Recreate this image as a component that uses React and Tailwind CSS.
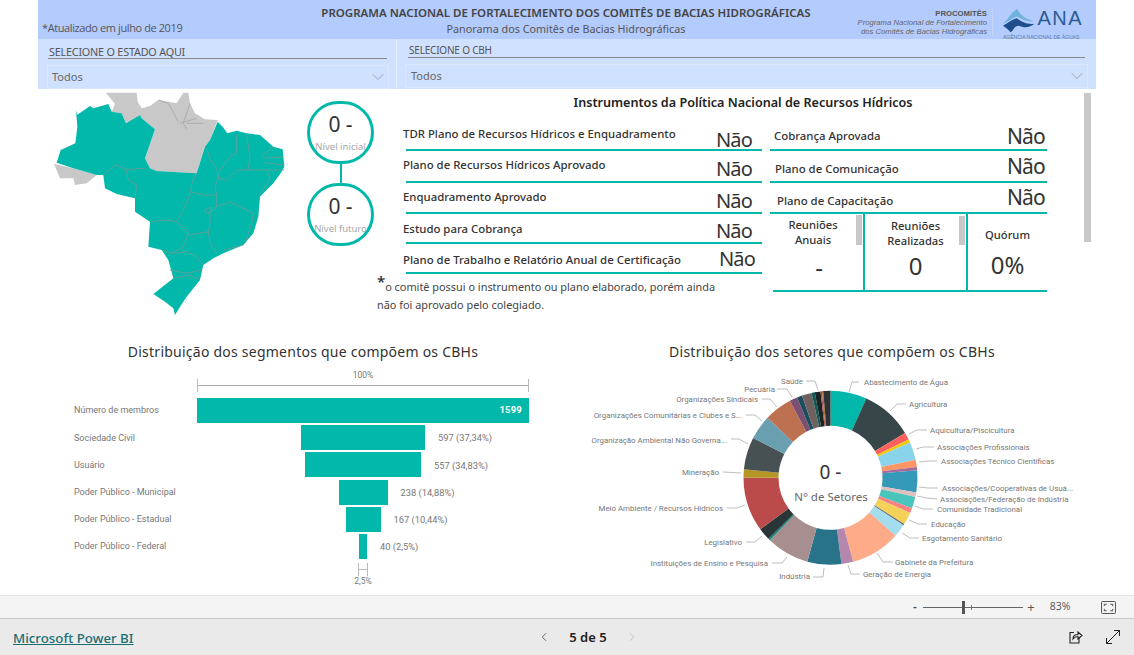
import React from 'react';
import { ChevronDown, ChevronLeft, ChevronRight } from 'lucide-react';

const leftRows = [
  { label: 'TDR Plano de Recursos Hídricos e Enquadramento', h: 'h-[31px]', lab: 'pt-[6px]', val: 'pt-[6px]', right: 'pr-[10px]' },
  { label: 'Plano de Recursos Hídricos Aprovado', h: 'h-[32px]', lab: 'pt-[6px]', val: 'pt-[4px]', right: 'pr-[10px]' },
  { label: 'Enquadramento Aprovado', h: 'h-[31px]', lab: 'pt-[6px]', val: 'pt-[4px]', right: 'pr-[10px]' },
  { label: 'Estudo para Cobrança', h: 'h-[30px]', lab: 'pt-[7px]', val: 'pt-[3px]', right: 'pr-[10px]' },
  { label: 'Plano de Trabalho e Relatório Anual de Certificação', h: 'h-[30px]', lab: 'pt-[8px]', val: 'pt-[1px]', right: 'pr-[7px]' },
];

const rightRows = [
  { label: 'Cobrança Aprovada', h: 'h-[31px]', pad: 'pl-[4px]', lab: 'pt-[8px]', val: 'pt-[2px]' },
  { label: 'Plano de Comunicação', h: 'h-[32px]', pad: 'pl-[5px]', lab: 'pt-[10px]', val: 'pt-[1px]' },
  { label: 'Plano de Capacitação', h: 'h-[31px]', pad: 'pl-[7px]', lab: 'pt-[10px]', val: 'pt-0' },
];

const segments = [
  { label: 'Número de membros', width: 332, value: '1599' },
  { label: 'Sociedade Civil', width: 124, value: '597 (37,34%)' },
  { label: 'Usuário', width: 116, value: '557 (34,83%)' },
  { label: 'Poder Público - Municipal', width: 49, value: '238 (14,88%)' },
  { label: 'Poder Público - Estadual', width: 35, value: '167 (10,44%)' },
  { label: 'Poder Público - Federal', width: 8, value: '40 (2,5%)' },
];

// fatias da rosca: [fim em graus, cor]
const slices = [
  [24.3, '#01B8AA'], [59, '#374649'], [63.8, '#FD625E'], [66, '#F2C80F'], [78, '#8AD4EB'],
  [82.8, '#FE9666'], [85, '#A66999'], [99.7, '#3599B8'], [102.8, '#DFBFBF'], [110.5, '#4AC5BB'],
  [113.8, '#FB8281'], [122, '#F4D25A'], [123, '#5F6B6D'], [131.7, '#A4DDEE'], [164.9, '#FDAB89'],
  [172.8, '#B687AC'], [195.5, '#28738A'], [224.2, '#A78F8F'], [225.5, '#168980'], [233.8, '#293537'],
  [270, '#BB4A4A'], [275.7, '#B59525'], [297.2, '#475052'], [313.6, '#6A9FB0'], [332.2, '#BD7150'],
  [337.4, '#7B4F71'], [340.9, '#1B4D5C'], [347.4, '#706160'], [349.6, '#0F5C55'], [353.4, '#1C2325'],
  [354.3, '#A84A4A'], [355.2, '#B06A3A'], [360, '#2B3335'],
];

const pieLabels = [
  ['Abastecimento de Água', 864, 382, 'start', '859,382 852,382 849,392'],
  ['Agricultura', 909, 404, 'start', '906,404 897,404 890,411'],
  ['Aquicultura/Piscicultura', 930, 430, 'start', '927,430 917,430 909,434'],
  ['Associações Profissionais', 937, 447, 'start', '934,447 923,447 916,449'],
  ['Associações Técnico Científicas', 941, 461, 'start', '937,461 928,461 919,462'],
  ['Associações/Cooperativas de Usuá...', 942, 488, 'start', '938,488 928,488 919,487'],
  ['Associações/Federação de Indústria', 940, 499, 'start', '937,499 927,498 917,496'],
  ['Comunidade Tradicional', 937, 509, 'start', '933,509 923,509 915,506'],
  ['Educação', 931, 524, 'start', '927,524 918,524 909,520'],
  ['Esgotamento Sanitário', 922, 538, 'start', '919,538 910,538 902,533'],
  ['Gabinete da Prefeitura', 895, 562, 'start', '893,562 883,562 877,553'],
  ['Geração de Energia', 863, 574, 'start', '860,574 851,574 848,565'],
  ['Indústria', 810, 576, 'end', '813,577 823,577 824,568'],
  ['Instituições de Ensino e Pesquisa', 768, 563, 'end', '772,563 782,563 787,557'],
  ['Legislativo', 742, 542, 'end', '746,542 755,542 762,536'],
  ['Meio Ambiente / Recursos Hídricos', 723, 508, 'end', '727,508 737,508 745,505'],
  ['Mineração', 719, 472, 'end', '723,472 741,473'],
  ['Organização Ambiental Não Governa...', 727, 440, 'end', '731,439 739,439 748,444'],
  ['Organizações Comunitárias e Clubes e S...', 742, 415, 'end', '746,415 755,415 762,421'],
  ['Organizações Síndicais', 758, 399, 'end', '762,399 770,399 777,407'],
  ['Pecuária', 775, 389, 'end', '777,389 787,389 792,397'],
  ['Saúde', 803, 381, 'end', '806,381 815,381 818,390'],
];

function slicePath(from, to) {
  const cx = 830.5, cy = 477.8, r = 87, ri = 52;
  const pt = (rad, deg) => {
    const a = (deg * Math.PI) / 180;
    return `${(cx + rad * Math.sin(a)).toFixed(2)} ${(cy - rad * Math.cos(a)).toFixed(2)}`;
  };
  const large = to - from > 180 ? 1 : 0;
  return `M${pt(r, from)} A${r} ${r} 0 ${large} 1 ${pt(r, to)} L${pt(ri, to)} A${ri} ${ri} 0 ${large} 0 ${pt(ri, from)} Z`;
}

function BrazilMap() {
  return (
    <svg viewBox="0 0 735 690" className="w-[245px] h-[230px] mt-[1px] ml-[2px] shrink-0">
      <path fill="#C8C8C8" d="M198 8 L290 8 L293 35 L305 55 L330 48 L355 30 L385 35 L410 40 L430 8 L445 8 L450 40 L465 70 L495 88 L533 90 L510 150 L495 170 L470 250 L350 243 L330 235 L315 205 L345 118 L305 85 L300 75 L258 100 L245 70 L215 65 L225 42 Z" />
      <path fill="#C8C8C8" d="M42 222 L100 235 L170 255 L140 280 L105 285 L100 265 L60 265 Z" />
      <path fill="#01B8AA" d="M108 60 L112 74 L150 48 L160 55 L205 42 L215 65 L245 70 L258 100 L300 75 L305 85 L345 118 L315 205 L330 235 L350 243 L470 250 L495 170 L510 150 L533 95 L548 110 L562 130 L590 122 L620 130 L660 135 L700 170 L728 178 L733 230 L722 250 L700 280 L660 320 L655 380 L640 430 L610 465 L550 490 L520 505 L490 525 L480 570 L440 620 L420 650 L405 675 L400 655 L375 635 L340 612 L400 565 L385 510 L365 480 L325 470 L330 395 L285 365 L285 325 L230 312 L195 295 L190 255 L170 255 L100 235 L50 218 L62 180 L106 160 L112 110 Z" />
      <g fill="none" stroke="#6F9C97" strokeWidth="2.5">
        <path d="M190 255 L225 225 L258 238 L315 235 M258 238 L265 270 L290 285 L285 325" />
        <path d="M470 250 L455 280 L452 305 L435 350 L410 395 L375 390 L335 395 M410 395 L445 430 L430 470 L395 490 L365 480" />
        <path d="M452 305 L490 315 L530 315 M500 175 L510 210 L530 235 L535 265 L525 290 L530 315 L530 350" />
        <path d="M530 350 L510 368 L510 400 L505 425 L445 435 M505 425 L510 460 L530 490 M495 358 L515 352 L512 368 L495 368 Z" />
        <path d="M530 350 L570 335 L600 350 L640 370 L635 400 L615 460 M610 465 L550 480" />
        <path d="M395 490 L440 485 L470 500 L490 525 M390 540 L440 550 L485 540 M400 565 L450 555 L480 570" />
        <path d="M590 135 L590 190 L570 200 L540 240 L535 265 L560 270 L590 240 L620 240 M620 135 L630 200 L625 240 L680 240 L690 265 L660 315" />
        <path d="M665 200 L700 170 M668 205 L730 200 M670 218 L733 225 M680 240 L733 240" />
      </g>
      <path d="M428 640 L445 618 L438 640 Z" fill="#E8F5F4" />
      <g fill="none" stroke="#9E9E9E" strokeWidth="2">
        <path d="M355 30 L385 40 L415 95 M450 40 L430 100 L440 118 M440 100 L490 100 M420 100 L470 85" />
      </g>
    </svg>
  );
}

function Circle({ label }) {
  return (
    <div className="w-[67px] h-[63px] rounded-full border-[3px] border-[#01B8AA] flex flex-col items-center justify-center">
      <div className="text-[21px] leading-[26px] text-[#333] -mt-[2px]">0 -</div>
      <div className="text-[9.5px] leading-[13px] text-[#A6A6A6] mt-[3px] whitespace-nowrap">{label}</div>
    </div>
  );
}

function AnaLogo() {
  return (
    <svg viewBox="0 0 36 26" className="w-[36px] h-[26px]">
      <path fill="#6FB3DC" d="M0 16 C6 10 9 4 15 0 C18 5 22 10 33 13 C25 14 20 11 15 8 C10 10 6 14 0 16 Z" />
      <path fill="#1F4E8C" d="M0 18 C6 15 10 11 15 10 C20 14 26 17 34 16 C28 21 22 20 17 18 C12 18 11 24 8 25 C6 22 3 20 0 18 Z" />
    </svg>
  );
}

function ShareIcon() {
  return (
    <svg viewBox="0 0 16 16" className="w-[16px] h-[16px]" fill="none" stroke="#222" strokeWidth="1.1">
      <path d="M7 3.5 H3 V14 H12 V9" />
      <path d="M6 10 C6 7 8 5.5 11 5.5 V3 L15 6.5 L11 10 V7.5 C9 7.5 7.5 8 6 10 Z" />
    </svg>
  );
}

function ExpandIcon() {
  return (
    <svg viewBox="0 0 16 16" className="w-[16px] h-[16px]" fill="none" stroke="#222" strokeWidth="1">
      <path d="M9 1.5 H14.5 V7 M14.5 1.5 L1.5 14.5 M1.5 9 V14.5 H7" />
    </svg>
  );
}

function FitIcon() {
  return (
    <svg viewBox="0 0 16 14" className="w-[15px] h-[13px]" fill="none" stroke="#444" strokeWidth="1">
      <rect x="0.5" y="0.5" width="15" height="13" rx="1" />
      <path d="M3.5 5.5 V3.5 H6 M10 3.5 H12.5 V5.5 M12.5 8.5 V10.5 H10 M6 10.5 H3.5 V8.5" />
    </svg>
  );
}

export default function App() {
  return (
    <div className="w-[1134px] h-[655px] overflow-hidden bg-white flex flex-col font-['Noto_Sans',sans-serif]">
      <div className="flex-1 min-h-0 px-[38px] flex flex-col">
        {/* cabeçalho */}
        <div className="h-[39px] shrink-0 bg-[#B3CBFD] flex">
          <div className="w-[283px] pl-[4px] pt-[20px] text-[11px] leading-[16px] text-[#555] tracking-[-0.4px] font-['Open_Sans',sans-serif]">*Atualizado em julho de 2019</div>
          <div className="w-[490px] text-center pt-[4px]">
            <div className="text-[11.5px] leading-[17px] font-semibold text-[#444] whitespace-nowrap">PROGRAMA NACIONAL DE FORTALECIMENTO DOS COMITÊS DE BACIAS HIDROGRÁFICAS</div>
            <div className="text-[10.8px] leading-[15px] text-[#555] whitespace-nowrap">Panorama dos Comitês de Bacias Hidrográficas</div>
          </div>
          <div className="w-[176px] pt-[9px] text-right font-['Liberation_Sans',sans-serif] text-[#666]">
            <div className="text-[7.7px] leading-[9px] font-bold text-[#555]">PROCOMITÊS</div>
            <div className="text-[7.7px] leading-[9px] italic">Programa Nacional de Fortalecimento</div>
            <div className="text-[7.7px] leading-[9px] italic">dos Comitês de Bacias Hidrográficas</div>
          </div>
          <div className="w-px h-[27px] mt-[9px] ml-[5px] bg-[#C4D5F5]" />
          <div className="ml-[10px] pt-[8px] w-[80px] relative">
            <div className="flex items-start">
              <AnaLogo />
              <span className="ml-[1px] text-[20px] leading-[20px] tracking-[1.5px] font-light text-[#2C5C92] font-['Liberation_Sans',sans-serif]">ANA</span>
            </div>
            <div className="text-[5px] leading-[6px] text-[#5A7AA8] whitespace-nowrap font-['Liberation_Sans',sans-serif]">AGÊNCIA NACIONAL DE ÁGUAS</div>
          </div>
        </div>

        {/* filtros */}
        <div className="h-[50px] shrink-0 bg-[#D0E0FF] flex">
          <div className="w-[359px] border-r border-[#E6EEFF] pl-[9px] pr-[7px] pt-[5px]">
            <div className="ml-[1px] mr-[2px] h-[15px] border-b border-[#888] pl-[1px] text-[10.8px] leading-[15px] text-[#555] tracking-[-0.2px] whitespace-nowrap">SELECIONE O ESTADO AQUI</div>
            <div className="mt-[6px] h-[24px] border border-[#DCE7FF] flex items-center justify-between pl-[4px] text-[11px] text-[#666]">
              <span>Todos</span>
              <ChevronDown className="w-[20px] h-[20px] text-[#888]" strokeWidth={0.8} />
            </div>
          </div>
          <div className="flex-1 pl-[8px] pr-[8px] pt-[4px]">
            <div className="mx-[3px] h-[15px] border-b border-[#888] pl-[1px] text-[10px] leading-[15px] text-[#555] tracking-[-0.2px]">SELECIONE O CBH</div>
            <div className="mt-[6px] h-[24px] border border-[#DCE7FF] flex items-center justify-between pl-[5px] text-[11px] text-[#666]">
              <span>Todos</span>
              <ChevronDown className="w-[20px] h-[20px] text-[#888]" strokeWidth={0.8} />
            </div>
          </div>
        </div>

        {/* bloco superior */}
        <div className="h-[241px] shrink-0 flex relative">
          <BrazilMap />
          <div className="ml-[22px] mt-[12px] w-[67px] shrink-0 flex flex-col items-center">
            <Circle label="Nível inicial" />
            <div className="w-[2px] h-[19px] bg-[#01B8AA]" />
            <Circle label="Nível futuro" />
          </div>
          <div className="ml-[29px] w-[680px] shrink-0">
            <div className="h-[31px] pt-[5px] text-center text-[12.6px] leading-[17px] font-semibold text-[#222] whitespace-nowrap">Instrumentos da Política Nacional de Recursos Hídricos</div>
            <div className="flex">
              <div className="w-[359px] shrink-0">
                {leftRows.map((row) => (
                  <div key={row.label} className={`${row.h} ml-[3px] border-b-[2px] border-[#01B8AA] flex justify-between ${row.right}`}>
                    <span className={`-ml-[3px] ${row.lab} text-[11.4px] leading-[16px] font-medium text-[#333] whitespace-nowrap`}>{row.label}</span>
                    <span className={`${row.val} text-[20px] leading-[27px] tracking-[-0.8px] text-[#333]`}>Não</span>
                  </div>
                ))}
                <div className="mt-[1px] -ml-[26px] w-[345px] text-[10.9px] leading-[18px] text-[#444]">
                  <div className="flex items-start">
                    <span className="shrink-0 -mt-[4px] text-[15px] leading-[20px] font-semibold text-[#333]">*</span>
                    <span className="pt-[3px] whitespace-nowrap">o comitê possui o instrumento ou plano elaborado, porém ainda</span>
                  </div>
                  <div className="whitespace-nowrap">não foi aprovado pelo colegiado.</div>
                </div>
              </div>
              <div className="ml-[8px] w-[277px] shrink-0">
                {rightRows.map((row) => (
                  <div key={row.label} className={`${row.h} border-b-[2px] border-[#01B8AA] flex justify-between ${row.pad}`}>
                    <span className={`${row.lab} text-[11.4px] leading-[16px] font-medium text-[#333] whitespace-nowrap`}>{row.label}</span>
                    <span className={`${row.val} text-[21px] leading-[29px] tracking-[-0.8px] text-[#333] pr-[2px]`}>Não</span>
                  </div>
                ))}
                <div className="ml-[3px] h-[78px] border-b-[2px] border-[#01B8AA] flex text-center text-[#333]">
                  <div className="w-[92px] border-r-[2px] border-[#01B8AA] relative pt-[3px]">
                    <div className="text-[11.2px] leading-[15px] font-medium pr-[10px]">Reuniões<br />Anuais</div>
                    <div className="text-[24px] leading-[32px] mt-[4px] pl-[2px]">-</div>
                    <div className="absolute right-[1px] top-[1px] w-[6px] h-[30px] bg-[#C8C8C8]" />
                  </div>
                  <div className="w-[103px] border-r-[2px] border-[#01B8AA] relative pt-[4px]">
                    <div className="text-[11.2px] leading-[15px] font-medium">Reuniões<br />Realizadas</div>
                    <div className="text-[24px] leading-[32px] mt-[2px]">0</div>
                    <div className="absolute right-[1px] top-[2px] w-[6px] h-[29px] bg-[#C8C8C8]" />
                  </div>
                  <div className="flex-1 pt-[13px]">
                    <div className="text-[11.2px] leading-[15px] font-medium">Quórum</div>
                    <div className="text-[24px] leading-[32px] mt-[7px]">0%</div>
                  </div>
                </div>
              </div>
            </div>
          </div>
          <div className="absolute left-[1046px] top-[4px] w-[7px] h-[149px] bg-[#C8C8C8]" />
        </div>

        {/* gráficos */}
        <div className="flex-1 min-h-0 flex">
          <div className="w-[530px] shrink-0">
            <div className="pt-[12px] h-[32px] text-center text-[14px] leading-[20px] text-[#333] tracking-[0.24px] whitespace-nowrap">Distribuição dos segmentos que compõem os CBHs</div>
            <div className="ml-[159px] w-[332px] font-['Roboto',sans-serif]">
              <div className="h-[16px] pt-[8px] text-center text-[8.5px] leading-[10px] text-[#777]">100%</div>
              <div className="h-[13px] mt-[1px] border-x border-[#BBB] flex items-center">
                <div className="w-full h-px bg-[#AAA]" />
              </div>
            </div>
            <div className="mt-[5px] pl-[36px] font-['Roboto',sans-serif]">
              {segments.map((seg, i) => (
                <div key={seg.label} className="h-[27.2px] flex items-center">
                  <div className="w-[123px] shrink-0 pt-[1px] text-[9px] text-[#777] whitespace-nowrap">{seg.label}</div>
                  <div className="w-[332px] shrink-0 flex justify-center">
                    <div className="relative h-[25px] bg-[#01B8AA] flex items-center justify-end" style={{ width: seg.width }}>
                      {i === 0 ? (
                        <span className="pr-[7px] text-[9.5px] tracking-[0.2px] font-bold text-white">{seg.value}</span>
                      ) : (
                        <span className="absolute left-full ml-[13px] pt-[1px] text-[9.3px] text-[#777] whitespace-nowrap">{seg.value}</span>
                      )}
                    </div>
                  </div>
                </div>
              ))}
              <div className="ml-[284px] w-[10px] h-[13px] mt-[3px] border-x border-[#BBB] flex items-center">
                <div className="w-full h-px bg-[#BBB]" />
              </div>
              <div className="ml-[123px] w-[332px] text-center text-[8.5px] leading-[11px] text-[#777]">2,5%</div>
            </div>
          </div>
          <div className="flex-1 min-w-0">
            <div className="pt-[12px] h-[32px] text-center text-[14px] leading-[20px] text-[#333] tracking-[0.26px] whitespace-nowrap">Distribuição dos setores que compõem os CBHs</div>
            <svg viewBox="580 370 510 222" className="ml-[12px] mt-[8px] w-[510px] h-[222px]">
              {slices.map(([end, color], i) => (
                <path key={color + i} d={slicePath(i === 0 ? 0 : slices[i - 1][0], end)} fill={color} />
              ))}
              {pieLabels.map(([text, x, y, anchor, line]) => (
                <g key={text}>
                  <polyline points={line} fill="none" stroke="#BDBDBD" strokeWidth="1" />
                  <text x={x} y={y + 3} textAnchor={anchor} fontSize="7.9" fill="#777" fontFamily="Roboto, sans-serif">{text}</text>
                </g>
              ))}
              <text x="830.5" y="479" textAnchor="middle" fontSize="19" fill="#333" fontFamily="Noto Sans, sans-serif">0 -</text>
              <text x="831" y="501" textAnchor="middle" fontSize="11.5" fill="#666" fontFamily="Noto Sans, sans-serif">N° de Setores</text>
            </svg>
          </div>
        </div>
      </div>

      {/* barra de zoom */}
      <div className="h-[23px] shrink-0 bg-[#F4F4F4] border-t border-[#E2E2E2] flex items-center justify-end pr-[18px] text-[10.5px] text-[#555] font-['Open_Sans',sans-serif]">
        <span className="w-[8px] mr-[4px] text-center font-bold text-[#444]">-</span>
        <div className="relative w-[100px] h-px bg-[#666] mr-[2px]">
          <div className="absolute left-[39px] -top-[6px] w-[3px] h-[13px] bg-[#555]" />
          <div className="absolute left-[48px] -top-[2px] w-px h-[5px] bg-[#777]" />
        </div>
        <span className="w-[12px] text-center text-[13px] leading-[13px]">+</span>
        <span className="ml-[11px] w-[24px] text-center">83%</span>
        <div className="ml-[29px] flex"><FitIcon /></div>
      </div>

      {/* rodapé */}
      <div className="h-[37px] shrink-0 bg-[#EAEAEA] border-t border-[#C8C8C8] relative flex items-center justify-between pl-[13px] pr-[13px]">
        <a className="pt-[3px] text-[13.3px] font-medium text-[#1A6E70] underline whitespace-nowrap">Microsoft Power BI</a>
        <div className="absolute left-[537px] top-0 h-full flex items-center">
          <ChevronLeft className="w-[14px] h-[14px] text-[#555]" strokeWidth={1.5} />
          <span className="ml-[17px] w-[40px] pt-[1px] text-center text-[13px] font-semibold text-[#222] whitespace-nowrap">5 de 5</span>
          <ChevronRight className="ml-[17px] w-[14px] h-[14px] text-[#BBB]" strokeWidth={1.5} />
        </div>
        <div className="flex items-center gap-[22px]">
          <ShareIcon />
          <ExpandIcon />
        </div>
      </div>
    </div>
  );
}
